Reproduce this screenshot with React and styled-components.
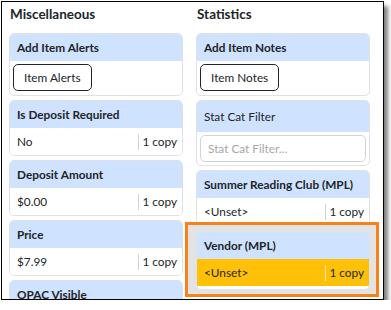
import React from "react";
import styled, { createGlobalStyle } from "styled-components";

const GlobalStyle = createGlobalStyle`
  body {
    margin: 0;
    background: #ffffff;
    font-family: Lato, "Noto Sans", sans-serif;
    color: #212529;
  }
`;

const Frame = styled.div`
  box-sizing: border-box;
  margin: 1px 0 0 1px;
  width: 383px;
  height: 299px;
  border: 1px solid #000;
  box-shadow: 4px 5px 4px rgba(0, 0, 0, 0.5);
  overflow: hidden;
  background: #fff;
  padding-left: 7px;
`;

const Columns = styled.div`
  display: grid;
  grid-template-columns: 174px 174px;
  column-gap: 13px;
  align-items: start;
`;

const Column = styled.div`
  display: flex;
  flex-direction: column;
`;

const Heading = styled.h2`
  margin: 2px 0 9px 1px;
  font-size: 13.5px;
  line-height: 20px;
  font-weight: 700;
`;

const Card = styled.div`
  border: 1px solid #dee2e6;
  border-radius: 5px;
  overflow: hidden;
  background: #fff;
  margin-bottom: ${(p) => (p.$last ? "0" : "4px")};
`;

const CardHeader = styled.div`
  background: #cfe2ff;
  height: ${(p) => (p.$tall ? "31px" : "27px")};
  display: flex;
  align-items: center;
  padding: 0 7px;
  font-size: 11.8px;
  font-weight: ${(p) => (p.$plain ? 400 : 700)};
  white-space: nowrap;
`;

const CardBody = styled.div`
  padding: ${(p) => (p.$roomy ? "3px 3px 4px" : "3px")};
`;

const OutlineButton = styled.button`
  box-sizing: border-box;
  height: 27px;
  padding: 0 10px;
  border: 1px solid #212529;
  border-radius: 5px;
  background: #fff;
  font-family: inherit;
  font-size: 11.8px;
  color: #212529;
`;

const FilterInput = styled.input`
  box-sizing: border-box;
  width: 100%;
  height: 27px;
  border: 1px solid #ced4da;
  border-radius: 5px;
  padding: 0 7px;
  font-family: inherit;
  font-size: 11.8px;
  &::placeholder {
    color: #a3a7ab;
  }
`;

const ValueRow = styled.div`
  display: flex;
  align-items: center;
  height: 27px;
  padding: 0 5px 0 7px;
  font-size: 11.8px;
  background: ${(p) => (p.$selected ? "#ffc107" : "#fff")};
  margin-bottom: ${(p) => (p.$selected ? "3px" : "0")};
`;

const Value = styled.span`
  flex: 1;
`;

const Copies = styled.span`
  padding-left: 3px;
  line-height: 16px;
  border-left: 1px solid ${(p) => (p.$selected ? "#ffe9a8" : "#ced4da")};
`;

const Highlight = styled.div`
  margin: -8px -9px 0 -11px;
  border: 3px solid #f7821b;
  background: #e3e3e3;
  padding: 6px 6px 4px 8px;
`;

const ButtonCard = ({ title, label }) => (
  <Card>
    <CardHeader>{title}</CardHeader>
    <CardBody $roomy>
      <OutlineButton>{label}</OutlineButton>
    </CardBody>
  </Card>
);

const ValueCard = ({ title, value, selected, last }) => (
  <Card $last={last}>
    <CardHeader>{title}</CardHeader>
    <ValueRow $selected={selected}>
      <Value>{value}</Value>
      <Copies $selected={selected}>1 copy</Copies>
    </ValueRow>
  </Card>
);

const App = () => (
  <>
    <GlobalStyle />
    <Frame>
      <Columns>
        <Column>
          <Heading>Miscellaneous</Heading>
          <ButtonCard title="Add Item Alerts" label="Item Alerts" />
          <ValueCard title="Is Deposit Required" value="No" />
          <ValueCard title="Deposit Amount" value="$0.00" />
          <ValueCard title="Price" value="$7.99" />
          <ValueCard title="OPAC Visible" value="Yes" />
        </Column>
        <Column>
          <Heading>Statistics</Heading>
          <ButtonCard title="Add Item Notes" label="Item Notes" />
          <Card>
            <CardHeader $plain $tall>
              Stat Cat Filter
            </CardHeader>
            <CardBody>
              <FilterInput placeholder="Stat Cat Filter..." />
            </CardBody>
          </Card>
          <ValueCard title="Summer Reading Club (MPL)" value="<Unset>" />
          <Highlight>
            <ValueCard title="Vendor (MPL)" value="<Unset>" selected last />
          </Highlight>
        </Column>
      </Columns>
    </Frame>
  </>
);

export default App;
